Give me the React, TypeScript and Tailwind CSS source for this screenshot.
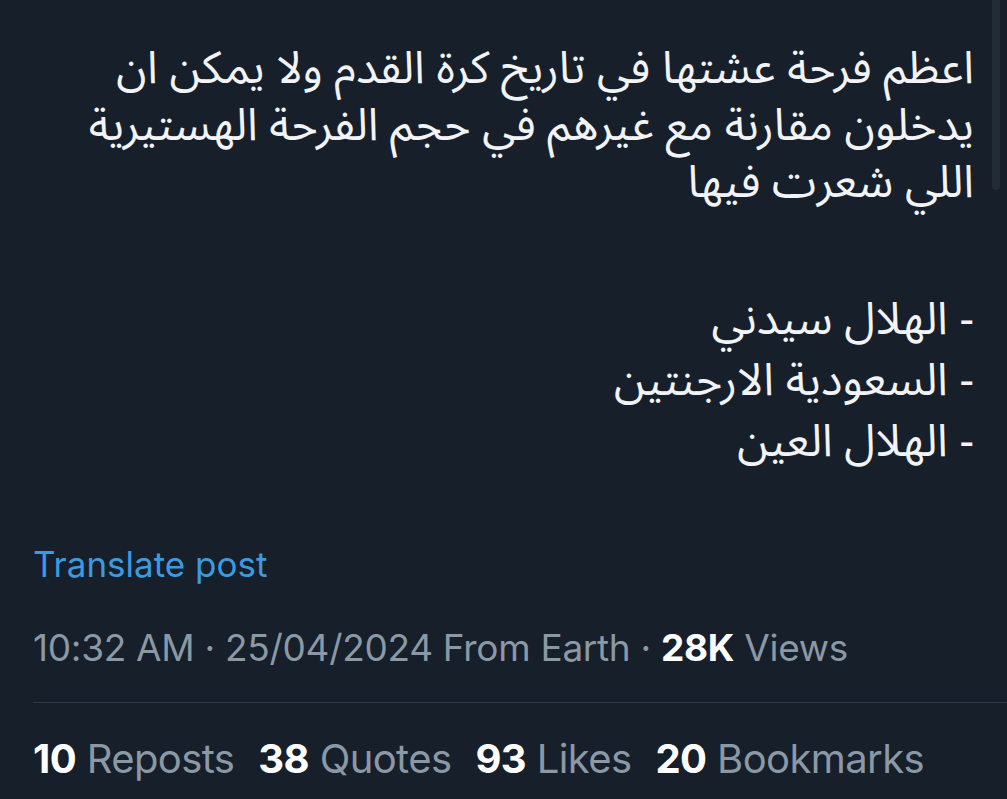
export default function App() {
  return (
    <div className="relative h-[799px] w-[1007px] overflow-hidden bg-[#161f2a]">
      <div className="absolute right-[7px] top-0 h-[190px] w-[8px] rounded-b-full bg-[#222c37]" />
      <div className="flex flex-col px-[33px] pt-[40px]">
        <div
          dir="rtl"
          className="text-right text-[45px] text-[#f1f3f5]"
          style={{ fontFamily: '"Noto Sans Arabic", "DejaVu Sans", "Noto Sans", sans-serif' }}
        >
          <p className="leading-[57px]">اعظم فرحة عشتها في تاريخ كرة القدم ولا يمكن ان</p>
          <p className="leading-[57px]">يدخلون مقارنة مع غيرهم في حجم الفرحة الهستيرية</p>
          <p className="leading-[57px]">اللي شعرت فيها</p>
          <p className="h-[78px]"></p>
          <p className="leading-[61px]">- الهلال سيدني</p>
          <p className="leading-[61px]">- السعودية الارجنتين</p>
          <p className="leading-[61px]">- الهلال العين</p>
        </div>
        <div
          className="mt-[72px] text-[35px] leading-[40px] text-[#3a9be3]"
          style={{ fontFamily: 'Inter, "Liberation Sans", sans-serif' }}
        >
          Translate post
        </div>
        <div
          className="mt-[42px] text-[37px] leading-[44px] text-[#8b98a5] tracking-[-0.3px]"
          style={{ fontFamily: 'Inter, "Liberation Sans", sans-serif' }}
        >
          10:32 AM · 25/04/2024 From Earth · <span className="font-bold text-white">28K</span> Views
        </div>
        <div className="mt-[32px] mr-[-33px] h-px bg-[#2e3844]" />
        <div
          className="mt-[34px] flex gap-[24px] text-[40px] leading-[44px] text-[#8b98a5] tracking-[-0.6px]"
          style={{ fontFamily: 'Inter, "Liberation Sans", sans-serif' }}
        >
          <span><span className="font-bold text-white">10</span> Reposts</span>
          <span><span className="font-bold text-white">38</span> Quotes</span>
          <span><span className="font-bold text-white">93</span> Likes</span>
          <span><span className="font-bold text-white">20</span> Bookmarks</span>
        </div>
      </div>
    </div>
  )
}
